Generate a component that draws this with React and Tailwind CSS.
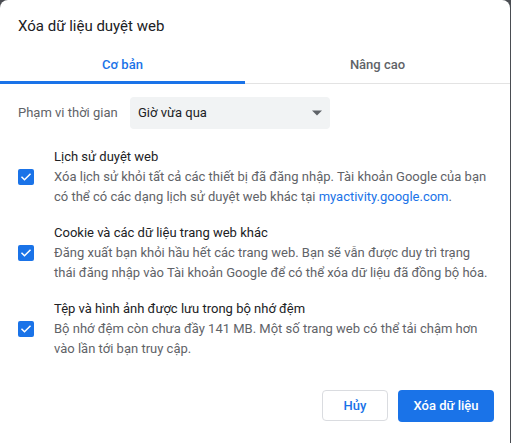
import React, { useState } from 'react';

const items = [
  {
    title: 'Lịch sử duyệt web',
    desc: (
      <>
        Xóa lịch sử khỏi tất cả các thiết bị đã đăng nhập. Tài khoản Google của bạn có thể có các dạng lịch sử duyệt web khác tại{' '}
        <span className="text-[#1a73e8]">myactivity.google.com</span>.
      </>
    ),
  },
  {
    title: 'Cookie và các dữ liệu trang web khác',
    desc: 'Đăng xuất bạn khỏi hầu hết các trang web. Bạn sẽ vẫn được duy trì trạng thái đăng nhập vào Tài khoản Google để có thể xóa dữ liệu đã đồng bộ hóa.',
  },
  {
    title: 'Tệp và hình ảnh được lưu trong bộ nhớ đệm',
    desc: 'Bộ nhớ đệm còn chưa đầy 141 MB. Một số trang web có thể tải chậm hơn vào lần tới bạn truy cập.',
  },
];

const Checkbox = ({ checked, onClick }) => (
  <button
    onClick={onClick}
    className={`flex h-[16px] w-[16px] shrink-0 items-center justify-center rounded-[2px] ${
      checked ? 'bg-[#1a73e8]' : 'border-2 border-[#5f6368] bg-white'
    }`}
  >
    {checked && (
      <svg width="12" height="12" viewBox="0 0 24 24" fill="none">
        <path d="M4 12.5l5 5L20 6.5" stroke="white" strokeWidth="3" strokeLinecap="square" />
      </svg>
    )}
  </button>
);

export default function App() {
  const [tab, setTab] = useState(0);
  const [checked, setChecked] = useState([true, true, true]);

  const toggle = (i) => setChecked(checked.map((c, j) => (j === i ? !c : c)));

  return (
    <div
      className="h-[443px] w-[511px] bg-[#4a4d52]"
      style={{ fontFamily: 'Roboto, "Noto Sans", sans-serif' }}
    >
      <div className="flex h-full w-[510px] flex-col rounded-t-[8px] bg-white">
        {/* Tiêu đề */}
        <div className="px-[18px] pt-[15px] text-[15px] leading-[22px] text-[#202124]">
          Xóa dữ liệu duyệt web
        </div>

        {/* Tabs */}
        <div className="mt-[9px] flex border-b border-[#e3e3e3]">
          {['Cơ bản', 'Nâng cao'].map((t, i) => (
            <button
              key={t}
              onClick={() => setTab(i)}
              className={`relative -mb-px flex h-[38px] items-center justify-center text-[13px] font-medium ${
                i === 0 ? 'w-[245px]' : 'flex-1'
              } ${tab === i ? 'border-b-[3px] border-[#1a73e8] pt-[3px] text-[#1a73e8]' : 'text-[#5f6368]'}`}
            >
              {t}
            </button>
          ))}
        </div>

        {/* Phạm vi thời gian */}
        <div className="mt-[13px] flex items-center px-[18px]">
          <span className="w-[112px] text-[13px] text-[#5f6368]">Phạm vi thời gian</span>
          <div className="flex h-[32px] w-[200px] items-center justify-between rounded-[4px] bg-[#f1f3f4] pl-[8px] pr-[8px] text-[13px] text-[#202124]">
            <span>Giờ vừa qua</span>
            <svg width="10" height="6" viewBox="0 0 10 5">
              <path d="M0 0h10L5 5z" fill="#5f6368" />
            </svg>
          </div>
        </div>

        {/* Danh sách */}
        <div className="mt-[18px] flex flex-col gap-[16px]">
          {items.map((it, i) => (
            <div key={i} className="flex items-center px-[18px]">
              <Checkbox checked={checked[i]} onClick={() => toggle(i)} />
              <div className="ml-[20px] w-[436px] text-[13px] leading-[20px]">
                <div className="text-[#202124]">{it.title}</div>
                <div className="text-[#5f6368]">{it.desc}</div>
              </div>
            </div>
          ))}
        </div>

        {/* Nút */}
        <div className="mt-auto mb-[21px] flex justify-end gap-[10px] pr-[16px]">
          <button className="h-[31px] w-[66px] rounded-[4px] border border-[#dadce0] bg-white text-[13px] font-medium text-[#1a73e8]">
            Hủy
          </button>
          <button className="h-[32px] w-[96px] rounded-[4px] bg-[#1a73e8] text-[13px] font-medium text-white">
            Xóa dữ liệu
          </button>
        </div>
      </div>
    </div>
  );
}
